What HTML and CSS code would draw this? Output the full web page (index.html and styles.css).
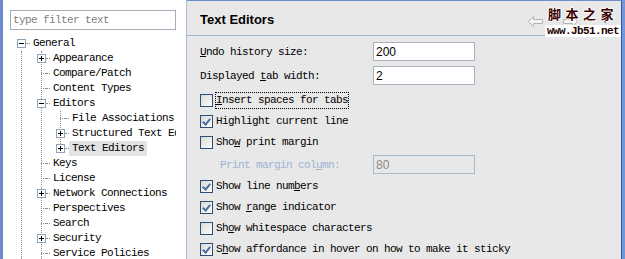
FILE: index.html
```html
<!DOCTYPE html>
<html lang="en">
  <head>
    <meta charset="UTF-8" />
    <meta name="viewport" content="width=device-width, initial-scale=1.0" />
    <title>Preferences - Text Editors</title>
    <link rel="stylesheet" href="styles.css">
  </head>

  <body>
    <div class="window">
      <div class="nav-pane">
        <input class="filter" type="text" placeholder="type filter text" />
        <div class="tree">
          <div class="row"><span class="knob open"></span><span class="twig"></span><span class="name">General</span></div>
          <div class="sub root">
            <div class="sub">
              <div class="row"><span class="knob closed"></span><span class="twig"></span><span class="name">Appearance</span></div>
              <div class="row"><span class="knob leaf"></span><span class="twig"></span><span class="name">Compare/Patch</span></div>
              <div class="row"><span class="knob leaf"></span><span class="twig"></span><span class="name">Content Types</span></div>
              <div class="row"><span class="knob open"></span><span class="twig"></span><span class="name">Editors</span></div>
              <div class="sub deep">
                <div class="row"><span class="knob leaf"></span><span class="twig"></span><span class="name">File Associations</span></div>
                <div class="row"><span class="knob closed"></span><span class="twig"></span><span class="name">Structured Text Editors</span></div>
                <div class="row last"><span class="knob closed"></span><span class="twig"></span><span class="name selected">Text Editors</span></div>
              </div>
              <div class="row"><span class="knob leaf"></span><span class="twig"></span><span class="name">Keys</span></div>
              <div class="row"><span class="knob leaf"></span><span class="twig"></span><span class="name">License</span></div>
              <div class="row"><span class="knob closed"></span><span class="twig"></span><span class="name">Network Connections</span></div>
              <div class="row"><span class="knob leaf"></span><span class="twig"></span><span class="name">Perspectives</span></div>
              <div class="row"><span class="knob leaf"></span><span class="twig"></span><span class="name">Search</span></div>
              <div class="row"><span class="knob closed"></span><span class="twig"></span><span class="name">Security</span></div>
              <div class="row"><span class="knob leaf"></span><span class="twig"></span><span class="name">Service Policies</span></div>
            </div>
          </div>
        </div>
      </div>

      <div class="divider"></div>

      <div class="page">
        <div class="page-head">
          <span class="page-title">Text Editors</span>
          <span class="page-nav">
            <svg width="15" height="11" viewBox="0 0 15 11"><polygon points="0.5,5.5 5.5,0.5 5.5,3.5 14.5,3.5 14.5,7.5 5.5,7.5 5.5,10.5" fill="#f4f4f4" stroke="#b4b4b4"/></svg>
            <svg class="fwd" width="15" height="11" viewBox="0 0 15 11"><polygon points="14.5,5.5 9.5,0.5 9.5,3.5 0.5,3.5 0.5,7.5 9.5,7.5 9.5,10.5" fill="#f4f4f4" stroke="#b4b4b4"/></svg>
            <svg class="menu" width="7" height="4" viewBox="0 0 7 4"><polygon points="0,0 7,0 3.5,4" fill="#2e3460"/></svg>
          </span>
          <div class="stamp">
            <div class="stamp-cn">脚本之家</div>
            <div class="stamp-url">www.Jb51.net</div>
          </div>
        </div>

        <div class="page-body">
          <div class="field">
            <label><u>U</u>ndo history size:</label>
            <input type="text" value="200" />
          </div>
          <div class="field">
            <label>Displayed <u>t</u>ab width:</label>
            <input type="text" value="2" />
          </div>

          <div class="check first"><span class="box"></span><label class="focus"><u>I</u>nsert spaces for tabs</label></div>
          <div class="check"><span class="box on"></span><label>Highlight current line</label></div>
          <div class="check"><span class="box"></span><label>Sho<u>w</u> print margin</label></div>
          <div class="field indent">
            <label class="off">Print margin col<u>u</u>mn:</label>
            <input type="text" value="80" disabled />
          </div>
          <div class="check"><span class="box on"></span><label>Show line num<u>b</u>ers</label></div>
          <div class="check"><span class="box on"></span><label>Show <u>r</u>ange indicator</label></div>
          <div class="check"><span class="box"></span><label>Sh<u>o</u>w whitespace characters</label></div>
          <div class="check"><span class="box on"></span><label>S<u>h</u>ow affordance in hover on how to make it sticky</label></div>
        </div>
      </div>
    </div>
  </body>
</html>
```

FILE: styles.css
```css
body {
  margin: 0;
  padding: 0;
  width: 625px;
  height: 259px;
  overflow: hidden;
  font-family: "Liberation Mono", monospace;
  font-size: 11px;
  letter-spacing: -0.6px;
  color: #000;
}

.window {
  display: flex;
  height: 259px;
  border-left: 3px solid #6b8bcf;
  border-right: 3px solid #7398da;
}

/* left side: filter + tree */
.nav-pane {
  width: 183px;
  flex: none;
  padding-top: 10px;
  background-color: #fff;
  box-sizing: border-box;
}

.filter {
  display: block;
  width: 166px;
  height: 20px;
  margin-left: 7px;
  padding: 0 2px;
  box-sizing: border-box;
  border: 1px solid #a3aeb9;
  font-family: "Liberation Mono", monospace;
  font-size: 11px;
  letter-spacing: -0.6px;
}

.filter::placeholder {
  color: #808080;
}

.tree {
  margin: 6px 10px 0 14px;
  overflow: hidden;
  white-space: nowrap;
}

.row {
  display: flex;
  align-items: center;
  height: 15px;
  line-height: 15px;
}

.sub {
  border-left: 1px dotted #8c8c8c;
  margin-left: 19px;
}

.sub.root {
  margin-left: 4px;
}

.sub.deep {
  margin-left: 18px;
}

.sub .row {
  margin-left: -5px;
}

.row.last {
  background: linear-gradient(#fff, #fff) no-repeat 4px 9px / 1px 6px;
}

.knob {
  flex: none;
  width: 9px;
  height: 9px;
  box-sizing: border-box;
  border: 1px solid #8fa4bb;
  background-color: #fff;
}

.knob.open {
  background: #fff linear-gradient(#000, #000) no-repeat center / 5px 1px;
}

.knob.closed {
  background:
    linear-gradient(#000, #000) no-repeat center / 5px 1px,
    linear-gradient(#000, #000) no-repeat center / 1px 5px,
    #fff;
}

.knob.leaf {
  width: 5px;
  height: 0;
  margin-left: 4px;
  border: none;
  border-top: 1px dotted #8c8c8c;
}

.twig {
  flex: none;
  width: 4px;
  height: 0;
  border-top: 1px dotted #8c8c8c;
}

.name {
  padding: 0 3px;
}

.name.selected {
  background-color: #e3e3e3;
}

.divider {
  width: 1px;
  flex: none;
  background-color: #a7bddb;
}

/* right side: preference page */
.page {
  flex: 1;
  background-color: #e8e8e8;
  border-top: 1px solid #6f8fd3;
  border-right: 1px solid #34559f;
}

.page-head {
  position: relative;
  display: flex;
  align-items: flex-start;
  height: 35px;
  padding: 11px 12px 0 13px;
  box-sizing: border-box;
  border-bottom: 1px solid #a3b5c8;
}

.page-title {
  flex: 1;
  font-family: "Liberation Sans", Arial, sans-serif;
  font-weight: bold;
  font-size: 13px;
  letter-spacing: 0;
  line-height: 16px;
}

.page-nav {
  display: flex;
  align-items: flex-start;
  margin-top: 4px;
}

.page-nav .fwd {
  margin-left: 20px;
}

.page-nav .menu {
  margin-left: 24px;
  margin-top: 3px;
}

.stamp {
  position: absolute;
  top: 4px;
  right: 0;
  width: 76px;
}

.stamp-cn {
  padding-left: 3px;
  font-family: "Noto Sans CJK SC", sans-serif;
  font-size: 13px;
  font-weight: bold;
  letter-spacing: 4.5px;
  line-height: 17px;
  color: #3a0000;
  text-shadow: 1px 0 #fff, -1px 0 #fff, 0 1px #fff, 0 -1px #fff;
}

.stamp-url {
  margin-top: 3px;
  padding: 1px 0 0 2px;
  height: 11px;
  line-height: 10px;
  background-color: #fff;
  color: #200000;
  font-weight: bold;
}

.page-body {
  padding: 6px 13px 0 13px;
}

.field {
  display: grid;
  grid-template-columns: 173px 102px;
  align-items: center;
  height: 19px;
  margin-bottom: 5px;
}

.field input {
  width: 102px;
  height: 19px;
  box-sizing: border-box;
  padding: 0 2px;
  border: 1px solid #a5b2c0;
  background-color: #fff;
  font-family: "Liberation Sans", Arial, sans-serif;
  font-size: 12px;
  color: #000;
}

.field input[disabled] {
  background-color: #e8e8e8;
  border-color: #a9bacb;
  color: #8a8a8a;
}

.field.indent {
  height: 23px;
  margin-bottom: 0;
}

.field.indent label {
  padding-left: 20px;
}

label.off {
  color: #9db3d6;
}

.check {
  display: flex;
  align-items: center;
  height: 21px;
}

.check.first {
  margin-top: 2px;
}

.check label {
  margin-left: 2px;
  line-height: 15px;
  border: 1px solid transparent;
}

.check label.focus {
  border: 1px dotted #000;
}

.box {
  flex: none;
  display: flex;
  justify-content: center;
  align-items: center;
  width: 13px;
  height: 13px;
  box-sizing: border-box;
  border: 1px solid #2d4d73;
  background: linear-gradient(135deg, #d9d9d4, #fdfdfd);
}

.box.on::after {
  content: "";
  width: 3px;
  height: 6px;
  margin-top: -2px;
  border-right: 2px solid #4f6f9f;
  border-bottom: 2px solid #4f6f9f;
  transform: rotate(40deg);
}
```
